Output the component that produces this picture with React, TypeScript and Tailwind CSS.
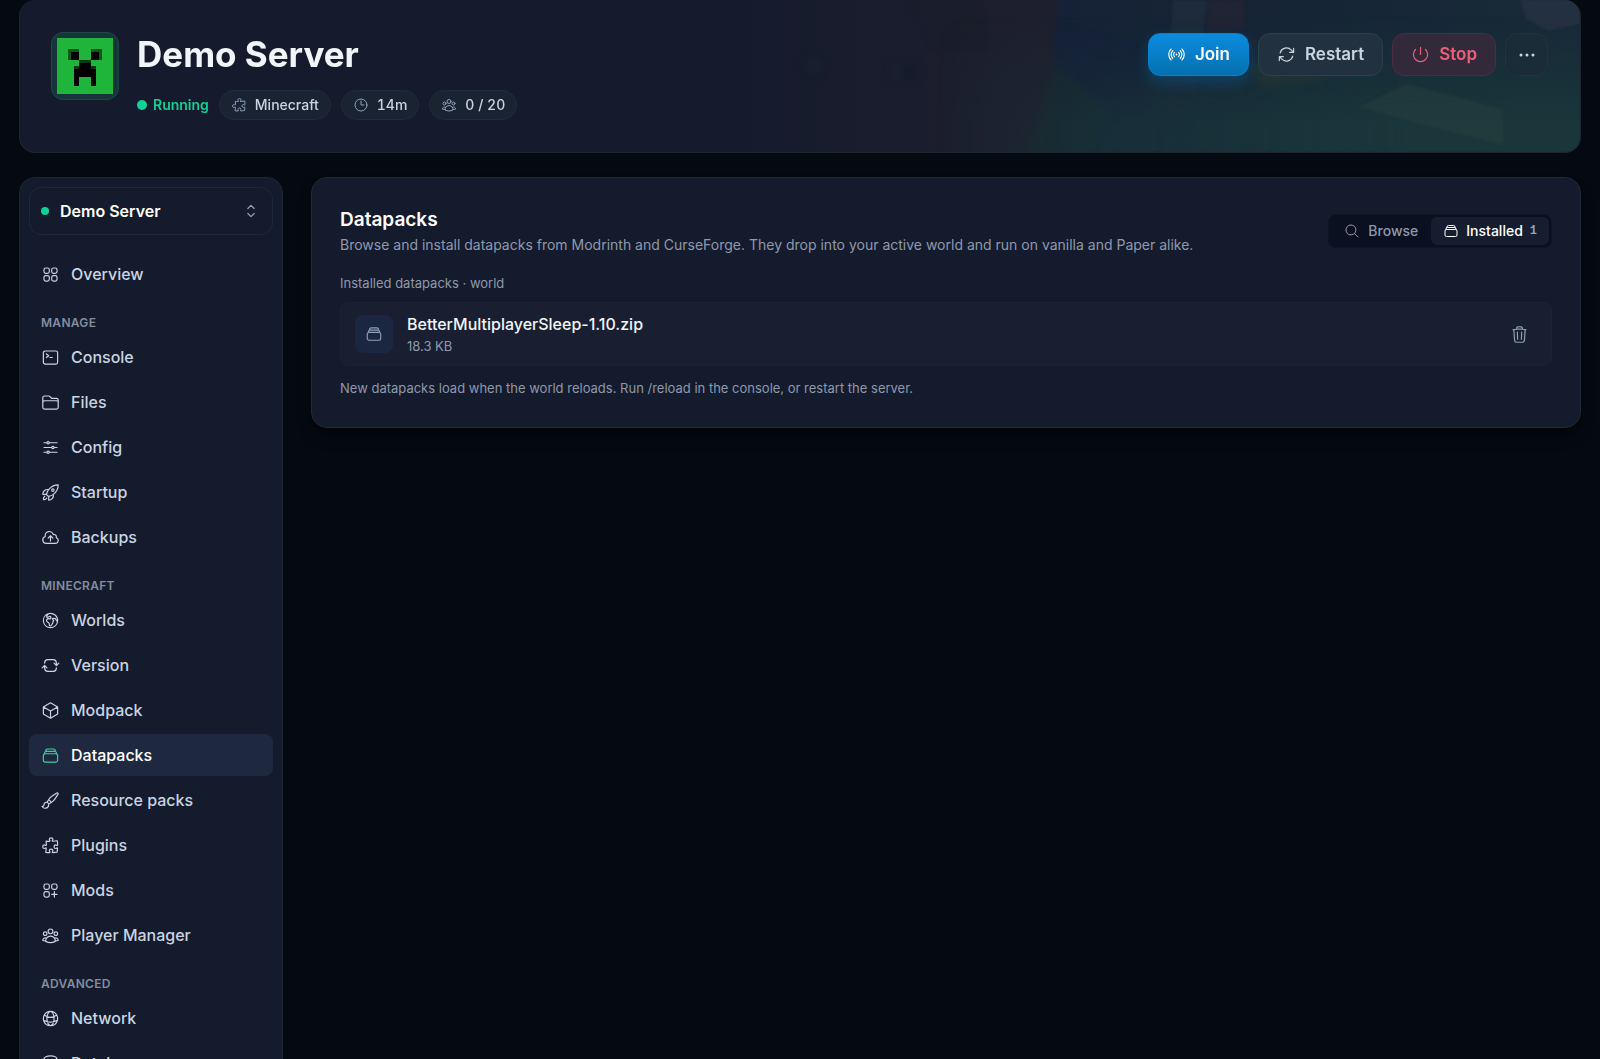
import { useState } from "react";
import type { IconType } from "react-icons";
import clsx from "clsx";
import {
  HiOutlineAdjustmentsHorizontal,
  HiOutlineArrowPath,
  HiOutlineArrowPathRoundedSquare,
  HiOutlineChevronUpDown,
  HiOutlineCircleStack,
  HiOutlineClock,
  HiOutlineCloudArrowUp,
  HiOutlineCommandLine,
  HiOutlineCube,
  HiOutlineEllipsisHorizontal,
  HiOutlineFolder,
  HiOutlineGlobeAlt,
  HiOutlineGlobeEuropeAfrica,
  HiOutlineMagnifyingGlass,
  HiOutlinePaintBrush,
  HiOutlinePower,
  HiOutlinePuzzlePiece,
  HiOutlineRectangleStack,
  HiOutlineRocketLaunch,
  HiOutlineSignal,
  HiOutlineSquares2X2,
  HiOutlineSquaresPlus,
  HiOutlineTrash,
  HiOutlineUserGroup,
} from "react-icons/hi2";

type NavItem = { label: string; icon: IconType };

const navGroups: { title?: string; items: NavItem[] }[] = [
  { items: [{ label: "Overview", icon: HiOutlineSquares2X2 }] },
  {
    title: "Manage",
    items: [
      { label: "Console", icon: HiOutlineCommandLine },
      { label: "Files", icon: HiOutlineFolder },
      { label: "Config", icon: HiOutlineAdjustmentsHorizontal },
      { label: "Startup", icon: HiOutlineRocketLaunch },
      { label: "Backups", icon: HiOutlineCloudArrowUp },
    ],
  },
  {
    title: "Minecraft",
    items: [
      { label: "Worlds", icon: HiOutlineGlobeEuropeAfrica },
      { label: "Version", icon: HiOutlineArrowPathRoundedSquare },
      { label: "Modpack", icon: HiOutlineCube },
      { label: "Datapacks", icon: HiOutlineRectangleStack },
      { label: "Resource packs", icon: HiOutlinePaintBrush },
      { label: "Plugins", icon: HiOutlinePuzzlePiece },
      { label: "Mods", icon: HiOutlineSquaresPlus },
      { label: "Player Manager", icon: HiOutlineUserGroup },
    ],
  },
  {
    title: "Advanced",
    items: [
      { label: "Network", icon: HiOutlineGlobeAlt },
      { label: "Databases", icon: HiOutlineCircleStack },
    ],
  },
];

function CreeperLogo() {
  return (
    <svg viewBox="0 0 20 20" className="size-14" shapeRendering="crispEdges">
      <rect width="20" height="20" fill="#1fb53a" />
      <path d="M4 4h4v4H4zM12 4h4v4h-4z" fill="#0b5a1c" />
      <path d="M5 5h3v3H5zM12 5h3v3h-3z" fill="#000" />
      <path d="M8 8h4v2h2v7h-2v-3H8v3H6v-7h2z" fill="#000" />
      <path d="M8 8h4v1H8zM6 10h2v1H6zM12 10h2v1h-2z" fill="#07380f" />
    </svg>
  );
}

// Faded artwork behind the right half of the header
function BannerArt() {
  return (
    <svg
      viewBox="0 0 860 153"
      preserveAspectRatio="none"
      className="absolute inset-y-0 right-0 h-full w-[55%]"
      aria-hidden="true"
    >
      <defs>
        <linearGradient id="sky" x1="0" y1="0" x2="1" y2="0">
          <stop offset="0" stopColor="#151b2d" />
          <stop offset="0.2" stopColor="#1a1d2d" />
          <stop offset="0.384" stopColor="#1e1f2e" />
          <stop offset="0.395" stopColor="#152235" />
          <stop offset="0.6" stopColor="#162436" />
          <stop offset="1" stopColor="#182a38" />
        </linearGradient>
        <linearGradient id="ground" x1="0" y1="0" x2="0" y2="1">
          <stop offset="0.1" stopColor="#1a363b" stopOpacity="0" />
          <stop offset="0.8" stopColor="#1a363b" />
        </linearGradient>
        <linearGradient id="fade" x1="0" y1="0" x2="1" y2="0">
          <stop offset="0.25" stopColor="#fff" stopOpacity="0" />
          <stop offset="0.45" stopColor="#fff" stopOpacity="0.6" />
          <stop offset="0.8" stopColor="#fff" />
        </linearGradient>
        <linearGradient id="pillar" x1="0" y1="0" x2="0" y2="1">
          <stop offset="0" stopColor="#22303f" stopOpacity="0.7" />
          <stop offset="1" stopColor="#22303f" stopOpacity="0" />
        </linearGradient>
        <mask id="right">
          <rect width="860" height="153" fill="url(#fade)" />
        </mask>
        <filter
          id="soft"
          x="-20%"
          y="-40%"
          width="140%"
          height="180%"
          colorInterpolationFilters="sRGB"
        >
          <feGaussianBlur stdDeviation="5" />
        </filter>
        <filter
          id="edge"
          x="-10%"
          y="-20%"
          width="120%"
          height="140%"
          colorInterpolationFilters="sRGB"
        >
          <feGaussianBlur stdDeviation="1" />
        </filter>
      </defs>
      <rect width="860" height="153" fill="url(#sky)" />
      <g filter="url(#soft)" opacity="0.7">
        <path d="M84 60h16v12H84zM170 66h10v14h-10z" fill="#1a2431" />
        <path d="M182 66h14v14h-14z" fill="#141929" />
        <path d="M190 0h60l14 44h-50z" fill="#1a1f2b" />
        <path d="M334 28l90 16v66l-50 8-42-60z" fill="#161e3a" opacity="0.7" />
        <path d="M334 64l56 50-30 60H300z" fill="#18282f" />
      </g>
      <rect width="860" height="153" fill="url(#ground)" mask="url(#right)" />
      <g filter="url(#edge)">
        <path d="M452 0h34l-14 130h-30z" fill="url(#pillar)" />
        <path d="M486 0h38v30h-38z" fill="#2a2432" opacity="0.5" />
      </g>
      <g filter="url(#soft)">
        <path d="M530 62l88 4-20 14-60 8z" fill="#2a3a32" opacity="0.5" />
      </g>
      <g filter="url(#edge)">
        <path d="M638 108l48-24 97 26v36l-83-21z" fill="#27403f" opacity="0.5" />
        <path d="M800 0h60v24l-32 7-22-12z" fill="#273244" opacity="0.8" />
      </g>
    </svg>
  );
}

function StatChip({ icon: Icon, label }: { icon: IconType; label: string }) {
  return (
    <span className="flex h-[30px] items-center gap-2 rounded-full border border-[#212b39] bg-[#1a2332] px-[11px] text-sm font-medium text-slate-300 tabular-nums">
      <Icon className="size-4 text-slate-400" />
      {label}
    </span>
  );
}

function ServerHeader() {
  return (
    <header className="relative overflow-hidden rounded-2xl border border-t-0 border-[#1d2633] bg-[#151b2d]">
      <BannerArt />
      <div className="relative flex items-start justify-between py-8 pr-8 pl-[31px]">
        <div className="flex items-start gap-[18px]">
          <div className="flex size-[68px] items-center justify-center rounded-xl border border-[#1d4a49] bg-[#15353b]">
            <CreeperLogo />
          </div>
          <div className="flex flex-col gap-[14px]">
            <h1 className="text-[35px] leading-[44px] font-bold text-slate-100">
              Demo Server
            </h1>
            <div className="flex items-center gap-[10px]">
              <span className="flex items-center gap-[6px] text-sm font-semibold text-[#10d196]">
                <span className="size-[10px] rounded-full bg-[#10d196]" />
                Running
              </span>
              <StatChip icon={HiOutlinePuzzlePiece} label="Minecraft" />
              <StatChip icon={HiOutlineClock} label="14m" />
              <StatChip icon={HiOutlineUserGroup} label="0 / 20" />
            </div>
          </div>
        </div>
        <div className="flex items-center gap-[9px] pt-px text-[17px] font-semibold">
          <button className="flex h-[43px] items-center gap-[9px] rounded-xl border border-[#0a80cc] bg-linear-to-b from-[#0c8ce0] to-[#0570b0] px-[18px] text-white shadow-[0_6px_14px_rgba(2,110,190,0.35)]">
            <HiOutlineSignal className="size-[19px]" />
            Join
          </button>
          <button className="flex h-[43px] items-center gap-[9px] rounded-xl border border-[#2d3f49] bg-[#22313f] px-[18px] text-slate-300">
            <HiOutlineArrowPath className="size-[19px]" />
            Restart
          </button>
          <button className="flex h-[43px] items-center gap-[9px] rounded-xl border border-[#4c2c40] bg-[#322a3b] px-[18px] text-[#ea6079]">
            <HiOutlinePower className="size-[19px]" />
            Stop
          </button>
          <button
            aria-label="More actions"
            className="flex size-[43px] items-center justify-center rounded-xl border border-[#203341] bg-[#1a2c37] text-slate-300"
          >
            <HiOutlineEllipsisHorizontal className="size-6" />
          </button>
        </div>
      </div>
    </header>
  );
}

function Sidebar({
  active,
  onSelect,
}: {
  active: string;
  onSelect: (label: string) => void;
}) {
  return (
    <aside className="w-[264px] shrink-0 rounded-2xl border border-[#1c2635] bg-[#141b2d] p-[9px]">
      <button className="flex h-12 w-full items-center gap-[11px] rounded-xl border border-[#1e2838] px-[11px] font-semibold text-white">
        <span className="size-2 rounded-full bg-[#10d196]" />
        Demo Server
        <HiOutlineChevronUpDown className="ml-auto size-5 text-slate-400" />
      </button>
      <nav className="mt-[18px]">
        {navGroups.map((group) => (
          <div key={group.items[0].label}>
            {group.title && (
              <h2 className="flex h-[41px] items-center pt-[14px] pl-3 text-xs font-semibold tracking-wide text-[#848d9f] uppercase">
                {group.title}
              </h2>
            )}
            <div className="flex flex-col gap-[3px]">
              {group.items.map(({ label, icon: Icon }) => (
                <a
                  key={label}
                  href="#"
                  onClick={() => onSelect(label)}
                  className={clsx(
                    "flex h-[42px] items-center gap-[11px] rounded-lg px-3 font-medium",
                    label === active
                      ? "bg-[#1e2940] text-white"
                      : "text-slate-300",
                  )}
                >
                  <Icon
                    className={clsx(
                      "size-[19px]",
                      label === active && "text-[#34d399]",
                    )}
                  />
                  {label}
                </a>
              ))}
            </div>
          </div>
        ))}
      </nav>
    </aside>
  );
}

function DatapacksPanel() {
  const [tab, setTab] = useState("installed");

  return (
    <main className="min-w-0 flex-1 rounded-2xl border border-[#1f2937] bg-[#141b2d] px-7 pt-7 pb-[29px] shadow-lg shadow-black/40">
      <div className="flex items-center justify-between">
        <div>
          <h2 className="text-[19px] leading-7 font-semibold text-white">
            Datapacks
          </h2>
          <p className="text-sm leading-[22px] text-[#8f99ab]">
            Browse and install datapacks from Modrinth and CurseForge. They drop
            into your active world and run on vanilla and Paper alike.
          </p>
        </div>
        <div className="flex rounded-lg border border-[#0d1422] bg-[#0a1020] p-[2px] text-sm font-medium">
          <button
            onClick={() => setTab("browse")}
            className={clsx(
              "flex h-7 items-center gap-2 rounded-md px-[13px]",
              tab === "browse" ? "bg-[#151d2e] text-white" : "text-[#8f99ab]",
            )}
          >
            <HiOutlineMagnifyingGlass className="size-4" />
            Browse
          </button>
          <button
            onClick={() => setTab("installed")}
            className={clsx(
              "flex h-7 items-center gap-[7px] rounded-md px-3",
              tab === "installed"
                ? "bg-[#151d2e] text-white"
                : "text-[#8f99ab]",
            )}
          >
            <HiOutlineRectangleStack className="size-4" />
            Installed
            <span className="font-['Liberation_Mono',monospace] text-xs font-bold text-slate-400">
              1
            </span>
          </button>
        </div>
      </div>
      <p className="mt-[17px] text-[13px] leading-5 text-[#8f99ab]">
        Installed datapacks · world
      </p>
      <div className="mt-[9px] flex h-16 items-center rounded-lg border border-[#1b2232] bg-[#191f31] px-[14px]">
        <div className="flex size-[38px] items-center justify-center rounded-lg bg-[#1b2740]">
          <HiOutlineRectangleStack className="size-[18px] text-slate-400" />
        </div>
        <div className="ml-[14px]">
          <div className="leading-6 font-medium text-slate-100">
            BetterMultiplayerSleep-1.10.zip
          </div>
          <div className="text-[13px] leading-5 text-[#8f99ab]">18.3 KB</div>
        </div>
        <button
          aria-label="Delete datapack"
          className="ml-auto flex size-9 items-center justify-center text-slate-400"
        >
          <HiOutlineTrash className="size-[19px]" />
        </button>
      </div>
      <p className="mt-3 text-[13px] leading-5 text-[#8f99ab]">
        New datapacks load when the world reloads. Run /reload in the console,
        or restart the server.
      </p>
    </main>
  );
}

export default function App() {
  const [active, setActive] = useState("Datapacks");

  return (
    <div className="h-screen overflow-hidden bg-[#050911] px-[19px] font-['Inter',sans-serif] antialiased">
      <ServerHeader />
      <div className="mt-6 flex items-start gap-7">
        <Sidebar active={active} onSelect={setActive} />
        <DatapacksPanel />
      </div>
    </div>
  );
}
